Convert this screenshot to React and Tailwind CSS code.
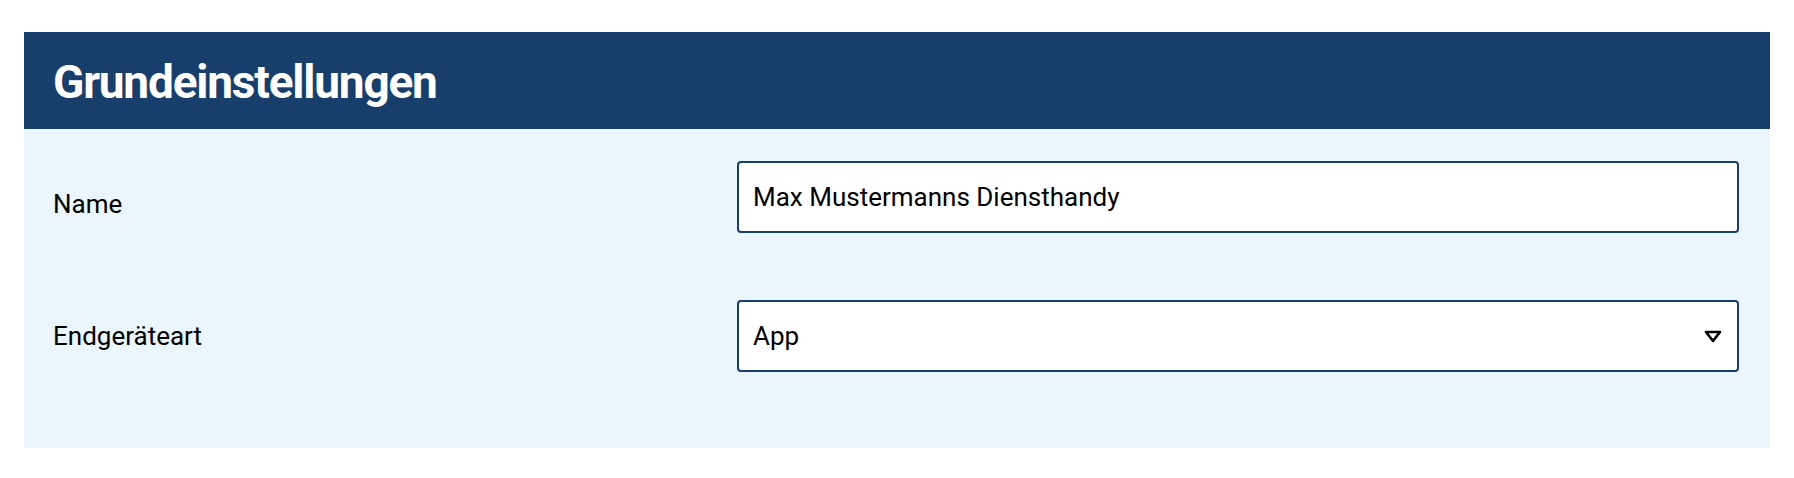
import { useState } from "react";

const Field = ({ label, labelClass = "", children }) => (
  <div className="flex items-center">
    <label className={`w-[684px] shrink-0 text-[26px] text-black ${labelClass}`}>
      {label}
    </label>
    <div className="flex-1">{children}</div>
  </div>
);

const App = () => {
  const [name, setName] = useState("Max Mustermanns Diensthandy");
  const [type, setType] = useState("App");

  return (
    <div
      className="px-[24px] pt-[32px] bg-white"
      style={{ fontFamily: "Roboto, 'Noto Sans', sans-serif" }}
    >
      <div className="bg-[#183e6b] h-[97px] flex items-center px-[29px]">
        <h2 className="text-white font-bold text-[46px] tracking-[-1.2px] leading-none mt-[2px]">
          Grundeinstellungen
        </h2>
      </div>

      <div className="bg-[#ebf5fc] pl-[29px] pr-[31px] pt-[32px] pb-[76px] flex flex-col gap-[67px]">
        {/* label sits a bit lower than the input text here */}
        <Field label="Name" labelClass="pt-[14px]">
          <input
            type="text"
            value={name}
            onChange={(e) => setName(e.target.value)}
            className="block w-full h-[72px] px-[14px] bg-white border-2 border-[#183e6b] rounded-[4px] text-[26px] text-black outline-none"
          />
        </Field>

        <Field label="Endgeräteart">
          <div className="relative">
            <select
              value={type}
              onChange={(e) => setType(e.target.value)}
              className="block w-full h-[72px] px-[14px] bg-white border-2 border-[#183e6b] rounded-[4px] text-[26px] text-black outline-none appearance-none"
            >
              <option>App</option>
              <option>Webbrowser</option>
            </select>
            <svg
              className="absolute right-[17px] top-[30px] pointer-events-none"
              width="18"
              height="13"
              viewBox="0 0 18 13"
            >
              <path
                d="M2 2 H16 L9 11 Z"
                fill="none"
                stroke="black"
                strokeWidth="2.6"
                strokeLinejoin="round"
              />
            </svg>
          </div>
        </Field>
      </div>
    </div>
  );
};

export default App;
